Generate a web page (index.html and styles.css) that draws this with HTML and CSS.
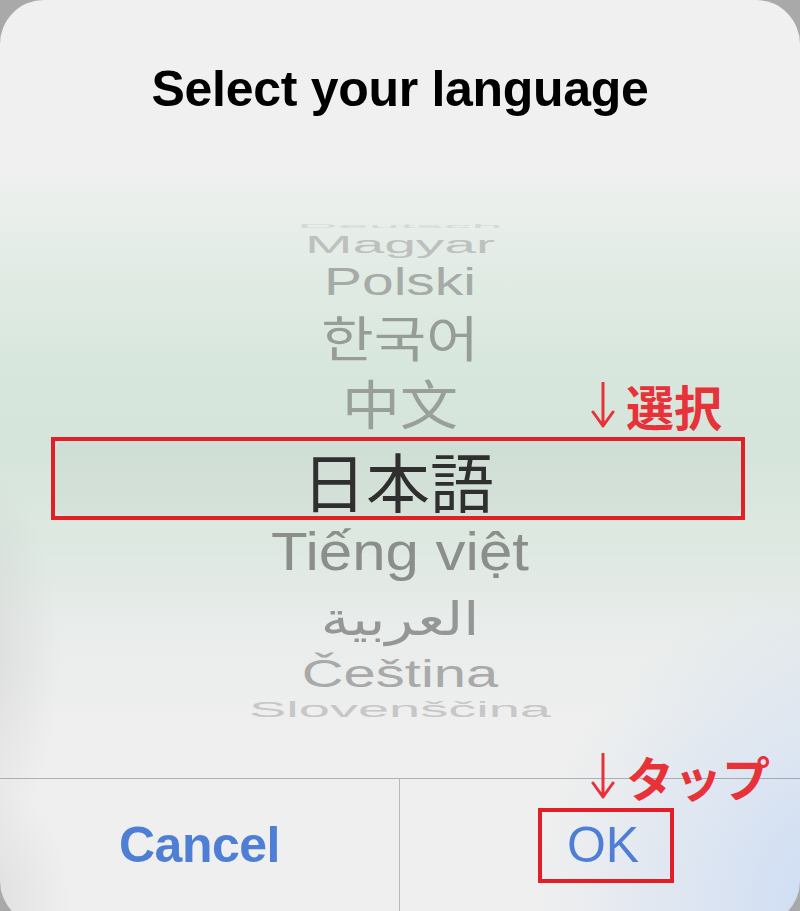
FILE: index.html
```html
<!DOCTYPE html>
<html lang="en">
<head>
<meta charset="utf-8">
<title>Select your language</title>
<link rel="stylesheet" href="styles.css">
</head>
<body>
<div class="dialog">
  <header class="header">
    <h1 class="title">Select your language</h1>
  </header>

  <div class="picker">
    <div class="row r-de"><span class="item latin s-de">Deutsch</span></div>
    <div class="row r-hu"><span class="item latin s-hu">Magyar</span></div>
    <div class="row r-pl"><span class="item latin s-pl">Polski</span></div>
    <div class="row r-ko"><span class="item ko">한국어</span></div>
    <div class="row r-zh"><span class="item zh">中文</span></div>
    <div class="row r-ja">
      <div class="sel-box">
        <div class="band"><span class="item ja">日本語</span></div>
      </div>
    </div>
    <div class="row r-vi"><span class="item latin s-vi">Tiếng việt</span></div>
    <div class="row r-ar"><span class="item ar" dir="rtl">العربية</span></div>
    <div class="row r-cs"><span class="item latin s-cs">Čeština</span></div>
    <div class="row r-sl"><span class="item latin s-sl">Slovenščina</span></div>

    <div class="note note-select">
      <svg class="arrow" viewBox="0 0 26 46" width="26" height="46" aria-hidden="true">
        <path d="M13 1 V44 M3 30 L13 44 L23 30" fill="none" stroke="#e8323a" stroke-width="3" stroke-linecap="round" stroke-linejoin="round"/>
      </svg>
      <span class="note-text">選択</span>
    </div>
  </div>

  <div class="spacer"></div>

  <footer class="footer">
    <div class="note note-tap">
      <svg class="arrow" viewBox="0 0 26 46" width="26" height="46" aria-hidden="true">
        <path d="M13 1 V44 M3 30 L13 44 L23 30" fill="none" stroke="#e8323a" stroke-width="3" stroke-linecap="round" stroke-linejoin="round"/>
      </svg>
      <span class="note-text">タップ</span>
    </div>
    <button class="btn cancel" type="button">Cancel</button>
    <button class="btn ok" type="button"><span class="ok-box">OK</span></button>
  </footer>
</div>
</body>
</html>
```
FILE: styles.css
```css
* { box-sizing: border-box; }

html, body {
  margin: 0;
  padding: 0;
}

body {
  width: 800px;
  height: 911px;
  overflow: hidden;
  background: #a9a9a9;
  font-family: "Liberation Sans", Arial, sans-serif;
}

.dialog {
  position: relative;
  width: 800px;
  height: 925px;
  border-radius: 44px;
  overflow: hidden;
  display: flex;
  flex-direction: column;
  padding-bottom: 14px;
  background:
    radial-gradient(ellipse 300px 320px at 840px 900px, rgba(200, 218, 245, 0.9), rgba(200, 218, 245, 0) 100%),
    radial-gradient(ellipse 90px 200px at -30px 660px, rgba(195, 195, 195, 0.45), rgba(195, 195, 195, 0) 100%),
    radial-gradient(ellipse 90px 120px at -20px 900px, rgba(200, 200, 200, 0.45), rgba(200, 200, 200, 0) 100%),
    linear-gradient(to bottom, #f0f0f0 0, #eff0ef 170px, #e3ece6 260px, #d8e7dd 360px, #d6e5db 450px, #dde8e1 540px, #e8ecea 620px, #eeefee 720px, #efefef 911px);
}

/* ---------- header ---------- */
.header {
  height: 216px;
  flex: none;
  padding-top: 59px;
}

.title {
  margin: 0;
  text-align: center;
  font-size: 50px;
  line-height: 60px;
  font-weight: 700;
  color: #000;
  letter-spacing: -0.3px;
}

/* ---------- picker wheel ---------- */
.picker {
  position: relative;
  flex: none;
  display: flex;
  flex-direction: column;
}

.row {
  display: flex;
  align-items: center;
  justify-content: center;
  flex: none;
}

.item {
  display: block;
  line-height: 1;
  white-space: nowrap;
  transform-origin: 50% 50%;
}

.latin {
  font-family: "Liberation Sans", Arial, sans-serif;
  font-size: 58px;
}

.r-de { height: 20px; }
.r-hu { height: 19px; }
.r-pl { height: 53px; }
.r-ko { height: 54px; }
.r-zh { height: 75px; padding-top: 4px; }
.r-ja { height: 83px; }
.r-vi { height: 63px; }
.r-ar { height: 72px; }
.r-cs { height: 37px; }
.r-sl { height: 35px; }

.s-de { color: #d5d8d5; font-size: 56px; transform: scaleY(0.11); }
.s-hu { color: #bcc1bd; font-size: 57px; transform: scaleY(0.41); }
.s-pl { color: #a6aba7; font-size: 57px; transform: scaleY(0.67); }
.s-vi { color: #8c8e8c; font-size: 60px; transform: scaleY(0.9); }
.s-cs { color: #a8a9a8; font-size: 58px; transform: scaleY(0.67); }
.s-sl { color: #c6c7c6; font-size: 56px; transform: scaleY(0.38); }

.ko {
  font-family: "Noto Sans CJK KR", sans-serif;
  font-size: 57px;
  color: #979c98;
  transform: scaleY(0.86);
}

.zh {
  font-family: "Noto Sans CJK SC", sans-serif;
  font-size: 58px;
  color: #999f9a;
  transform: scaleY(0.92);
}

.ja {
  font-family: "Noto Sans CJK JP", sans-serif;
  font-size: 64px;
  color: #2f2f2f;
}

.ar {
  font-family: "DejaVu Sans", sans-serif;
  font-size: 58px;
  color: #959795;
  transform: scaleY(0.8);
}

.sel-box {
  width: 694px;
  height: 83px;
  margin-right: 4px;
  border: 4px solid #e41e26;
  display: flex;
}

.band {
  flex: 1;
  display: flex;
  align-items: center;
  justify-content: center;
  border-radius: 10px;
  background: rgba(120, 140, 128, 0.06);
}

/* ---------- annotations ---------- */
.note {
  position: absolute;
  display: flex;
  align-items: center;
  gap: 10px;
  color: #e8323a;
  font-family: "Noto Sans CJK JP", sans-serif;
  font-weight: 700;
  font-size: 48px;
  line-height: 48px;
}

.note .arrow {
  display: block;
  flex: none;
}

.note-select {
  left: 590px;
  top: 165px;
}

.note-tap {
  left: 590px;
  top: -27px;
}

/* ---------- footer ---------- */
.spacer {
  height: 51px;
  flex: none;
}

.footer {
  position: relative;
  flex: none;
  height: 133px;
  border-top: 1px solid rgba(0, 0, 0, 0.26);
  display: grid;
  grid-template-columns: 400px 400px;
}

.btn {
  margin: 0;
  padding: 0;
  border: none;
  background: transparent;
  font-family: "Liberation Sans", Arial, sans-serif;
  font-size: 50px;
  color: #4f7fd5;
  display: flex;
  align-items: center;
  justify-content: center;
}

.cancel {
  font-weight: 700;
  letter-spacing: -0.5px;
  border-right: 1px solid rgba(0, 0, 0, 0.22);
}

.ok {
  font-weight: 400;
}

.ok-box {
  display: flex;
  align-items: center;
  justify-content: center;
  width: 136px;
  height: 75px;
  border: 4px solid #e41e26;
  margin-left: 12px;
  padding-right: 6px;
}
```
